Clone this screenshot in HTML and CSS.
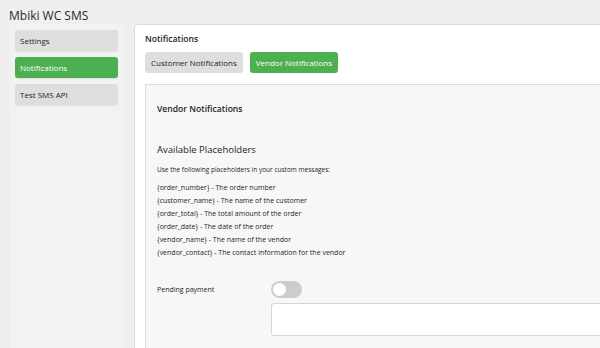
FILE: index.html
```html
<!DOCTYPE html>
<html lang="en">

<head>
    <meta charset="UTF-8" />
    <meta name="viewport" content="width=device-width, initial-scale=1.0" />
    <title>Mbiki WC SMS</title>
    <link rel="stylesheet" href="styles.css">
</head>

<body>
    <div class="wrap">
        <h1 class="page-title">Mbiki WC SMS</h1>
        <div class="layout">
            <nav class="sidebar">
                <a class="nav-btn" href="#">Settings</a>
                <a class="nav-btn active" href="#">Notifications</a>
                <a class="nav-btn" href="#">Test SMS API</a>
            </nav>

            <main class="content">
                <h2>Notifications</h2>
                <div class="tabs">
                    <button class="tab">Customer Notifications</button>
                    <button class="tab active">Vendor Notifications</button>
                </div>

                <section class="tab-panel">
                    <h3>Vendor Notifications</h3>

                    <h4>Available Placeholders</h4>
                    <p class="hint">Use the following placeholders in your custom messages:</p>
                    <ul class="placeholders">
                        <li>{order_number} - The order number</li>
                        <li>{customer_name} - The name of the customer</li>
                        <li>{order_total} - The total amount of the order</li>
                        <li>{order_date} - The date of the order</li>
                        <li>{vendor_name} - The name of the vendor</li>
                        <li>{vendor_contact} - The contact information for the vendor</li>
                    </ul>

                    <div class="field-row">
                        <label class="field-label">Pending payment</label>
                        <div class="field">
                            <span class="toggle"><span class="knob"></span></span>
                            <textarea class="message"></textarea>
                        </div>
                    </div>
                </section>
            </main>
        </div>
    </div>
</body>

</html>
```

FILE: styles.css
```css
html,
body {
    margin: 0;
    overflow: hidden;
    background-color: #efefef;
    font-family: "Open Sans", "Noto Sans", sans-serif;
    color: #1e1e1e;
}

.wrap {
    padding: 8px 0 0 9px;
}

.page-title {
    margin: 0;
    font-size: 12px;
    line-height: 16px;
    font-weight: 400;
    color: #2a2a2a;
}

.layout {
    display: flex;
    align-items: flex-start;
    gap: 11px;
    margin-left: 1px;
}

.sidebar {
    width: 103px;
    flex-shrink: 0;
    padding: 6px 5px;
    min-height: 330px;
    background-color: #f2f2f2;
    display: flex;
    flex-direction: column;
    gap: 6px;
}

.nav-btn {
    display: block;
    height: 21px;
    line-height: 21px;
    padding: 0 5px;
    font-size: 8px;
    color: #1e1e1e;
    text-decoration: none;
    background-color: #dedede;
    border-radius: 3px;
    box-shadow: 0 1px 1px rgba(0, 0, 0, 0.08);
}

.nav-btn.active {
    background-color: #4caf50;
    color: #fff;
}

.content {
    width: 700px;
    flex-shrink: 0;
    background-color: #fff;
    border: 1px solid #dcdcdc;
    border-radius: 4px;
    padding: 8px 10px 0;
}

.content h2 {
    margin: 0 0 7px;
    font-size: 8.6px;
    line-height: 12px;
    font-weight: 600;
}

.tabs {
    display: flex;
    gap: 7px;
}

.tab {
    height: 21px;
    padding: 0 6px;
    border: 0;
    border-radius: 3px;
    font-family: inherit;
    font-size: 8px;
    color: #1e1e1e;
    background-color: #dedede;
}

.tab.active {
    background-color: #4caf50;
    color: #fff;
}

.tab-panel {
    margin-top: 11px;
    padding: 18px 11px 30px;
    background-color: #f7f7f7;
    border: 1px solid #dcdcdc;
}

.tab-panel h3 {
    margin: 0;
    font-size: 8.6px;
    line-height: 12px;
    font-weight: 600;
}

.tab-panel h4 {
    margin: 28px 0 0;
    font-size: 9.5px;
    line-height: 14px;
    font-weight: 400;
}

.hint {
    margin: 8px 0 0;
    font-size: 6.5px;
    line-height: 10px;
}

.placeholders {
    margin: 6px 0 0;
    padding: 0;
    list-style: none;
    font-size: 7px;
    line-height: 13px;
}

.field-row {
    display: flex;
    margin-top: 22px;
}

.field-label {
    width: 114px;
    flex-shrink: 0;
    font-size: 7px;
    line-height: 17px;
}

.field {
    display: flex;
    flex-direction: column;
    align-items: flex-start;
    gap: 5px;
}

.toggle {
    display: block;
    width: 31px;
    height: 17px;
    border-radius: 9px;
    background-color: #ccc;
    position: relative;
}

.knob {
    position: absolute;
    left: 2px;
    top: 2px;
    width: 13px;
    height: 13px;
    border-radius: 50%;
    background-color: #fff;
}

.message {
    width: 420px;
    height: 33px;
    box-sizing: border-box;
    border: 1px solid #d6d6d6;
    border-radius: 3px;
    background-color: #fff;
    resize: none;
}
```
